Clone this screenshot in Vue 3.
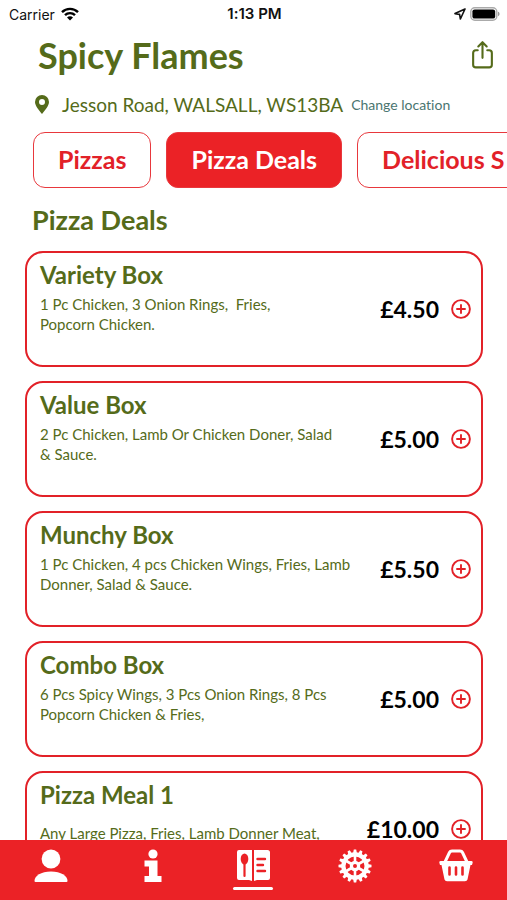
<template>
  <div class="app">
    <div class="status-bar">
      <div class="status-left">
        <span>Carrier</span>
        <svg class="wifi" viewBox="0 0 18 14" fill="none" stroke="#000" stroke-width="2.4">
          <path d="M1 5.2a11.3 11.3 0 0 1 16 0" />
          <path d="M4 8.2a7 7 0 0 1 10 0" />
          <path d="M9 13.6 6 10.6a4.2 4.2 0 0 1 6 0z" fill="#000" stroke="none" />
        </svg>
      </div>
      <span class="clock">1:13 PM</span>
      <div class="status-right">
        <svg class="arrow" viewBox="0 0 12 12" fill="none" stroke="#111" stroke-width="1.6" stroke-linejoin="round">
          <path d="M11 1 1 5.6l4.6.8.8 4.6z" />
        </svg>
        <svg class="battery" viewBox="0 0 30 14">
          <rect x="0.8" y="0.8" width="26" height="12.4" rx="4" fill="#fff" stroke="#aaa" stroke-width="1.4" />
          <rect x="2.4" y="2.4" width="22.8" height="9.2" rx="2.2" fill="#000" />
          <path d="M28 4.8c2 .6 2 3.8 0 4.4z" fill="#999" />
        </svg>
      </div>
    </div>

    <header class="header">
      <h1>Spicy Flames</h1>
      <button class="icon-btn" aria-label="Share">
        <svg class="share" viewBox="0 0 22 30" fill="none" stroke="#556b1a" stroke-width="2.2" stroke-linecap="round" stroke-linejoin="round">
          <path d="M6 10H4q-2.8 0-2.8 2.8v12.4q0 2.8 2.8 2.8h14q2.8 0 2.8-2.8V12.8Q20.8 10 18 10h-2" />
          <path d="M11 18V2M6.6 6 11 1.6 15.4 6" />
        </svg>
      </button>
    </header>

    <div class="location">
      <svg class="pin" viewBox="0 0 14 19">
        <path fill="#556b1a" fill-rule="evenodd" d="M7 0a7 7 0 0 1 7 7c0 4-4.400 8.800-7 12C4.400 15.800 0 11 0 7a7 7 0 0 1 7-7zm0 4a3 3 0 1 0 0 6 3 3 0 0 0 0-6z" />
      </svg>
      <span class="address">Jesson Road, WALSALL, WS13BA</span>
      <a href="#" class="change">Change location</a>
    </div>

    <div class="tabs">
      <button v-for="tab in tabs" :key="tab" class="tab" :class="{ active: tab === activeTab }" @click="activeTab = tab">
        {{ tab }}
      </button>
    </div>

    <main class="menu">
      <h2>{{ activeTab }}</h2>
      <article v-for="item in items" :key="item.name" class="card">
        <div class="info">
          <h3>{{ item.name }}</h3>
          <p :class="{ spaced: item.spaced }">{{ item.description }}</p>
        </div>
        <span class="price">{{ item.price }}</span>
        <button class="icon-btn" :aria-label="'Add ' + item.name">
          <svg class="plus" viewBox="0 0 20 20" fill="none" stroke="#e22128" stroke-width="1.9" stroke-linecap="round">
            <circle cx="10" cy="10" r="8.9" />
            <path d="M10 6v8M6 10h8" />
          </svg>
        </button>
      </article>
    </main>

    <nav class="bottom-nav">
      <button class="nav-item" aria-label="Account">
        <svg viewBox="0 0 34 34" fill="#fff">
          <circle cx="17" cy="10" r="9.4" />
          <path d="M.5 32c0-5 6.500-9.400 16.500-9.400s16.500 4.400 16.500 9.400q0 1-1 1h-31q-1 0-1-1z" />
        </svg>
      </button>
      <button class="nav-item" aria-label="Information">
        <svg viewBox="0 0 34 34" fill="#fff">
          <circle cx="18" cy="5" r="4.600" />
          <path d="M9.500 11.500h13V27h4v6h-17v-6H14v-9.500H9.500z" />
        </svg>
      </button>
      <button class="nav-item current" aria-label="Menu">
        <svg viewBox="0 0 34 34">
          <path fill="#fff" d="M3 1h13v31l-3-1H3q-2 0-2-2V3q0-2 2-2z" />
          <path fill="#fff" d="M18 1h13.500q2.500 0 2.500 2.500V29q0 2-2 2H21l-3 1z" />
          <ellipse cx="8.500" cy="10" rx="3.800" ry="5.500" fill="#eb2226" />
          <path d="M8.500 14v13" stroke="#eb2226" stroke-width="2.200" stroke-linecap="round" />
          <path d="M21.500 10H29M21.500 16H27M21.500 22H29" stroke="#eb2226" stroke-width="2.400" stroke-linecap="round" />
        </svg>
      </button>
      <button class="nav-item" aria-label="Settings">
        <svg viewBox="0 0 34 34" fill="none" stroke="#fff">
          <circle cx="17" cy="17" r="11.6" stroke-width="4.2" />
          <circle cx="17" cy="17" r="3.6" stroke-width="3.2" />
          <path v-for="n in 16" :key="'t' + n" d="M15 4.500 15.800.5h2.400l.8 4z" fill="#fff" stroke="none" :transform="`rotate(${n * 22.5} 17 17)`" />
          <path v-for="n in 6" :key="'s' + n" d="M17 13V6" stroke-width="2.600" :transform="`rotate(${n * 60} 17 17)`" />
        </svg>
      </button>
      <button class="nav-item" aria-label="Basket">
        <svg viewBox="0 0 34 34">
          <path d="M6 13 10.500 3.500Q11.200 2 13 2h8q1.800 0 2.500 1.500L28 13" fill="none" stroke="#fff" stroke-width="3" />
          <path fill="#fff" d="M1.500 12h31q1.500 0 1.200 1.500L33 16h-1.500l-3 14.500q-.5 1.800-2.500 1.800H8q-2 0-2.500-1.800L2.500 16H1L.3 13.500Q0 12 1.500 12z" />
          <path d="M10.500 18.500v7M17 18.500v7M23.500 18.500v7" stroke="#eb2226" stroke-width="2.600" stroke-linecap="round" />
        </svg>
      </button>
    </nav>
  </div>
</template>

<script setup>
import { ref } from 'vue'

const tabs = ['Pizzas', 'Pizza Deals', 'Delicious S']
const activeTab = ref('Pizza Deals')

const items = [
  { name: 'Variety Box', description: '1 Pc Chicken, 3 Onion Rings,  Fries,\nPopcorn Chicken.', price: '£4.50' },
  { name: 'Value Box', description: '2 Pc Chicken, Lamb Or Chicken Doner, Salad\n& Sauce.', price: '£5.00' },
  { name: 'Munchy Box', description: '1 Pc Chicken, 4 pcs Chicken Wings, Fries, Lamb Donner, Salad & Sauce.', price: '£5.50' },
  { name: 'Combo Box', description: '6 Pcs Spicy Wings, 3 Pcs Onion Rings, 8 Pcs Popcorn Chicken & Fries,', price: '£5.00' },
  { name: 'Pizza Meal 1', description: 'Any Large Pizza, Fries, Lamb Donner Meat,', price: '£10.00', spaced: true }
]
</script>

<style>
body {
  margin: 0;
  background: #fff;
}
</style>

<style scoped>
.app {
  display: flex;
  flex-direction: column;
  height: 100vh;
  overflow: hidden;
  font-family: Lato, "Liberation Sans", sans-serif;
  font-variant-ligatures: none;
  color: #556b1a;
}

button {
  padding: 0;
  border: 0;
  background: none;
  font-family: inherit;
  cursor: pointer;
}

svg {
  display: block;
}

h1,
h2,
h3,
p {
  margin: 0;
}

.status-bar {
  flex: none;
  display: grid;
  grid-template-columns: 1fr auto 1fr;
  align-items: center;
  height: 28px;
  padding: 0 7px 0 9px;
  font-family: Inter, "Liberation Sans", sans-serif;
  font-size: 14px;
  color: #111;
}

.status-left,
.status-right {
  display: flex;
  align-items: center;
  gap: 6px;
}

.status-right {
  justify-content: flex-end;
  gap: 4px;
}

.clock {
  font-size: 15px;
  line-height: 20px;
  font-weight: 600;
}

.wifi {
  width: 18px;
  height: 14px;
}

.arrow {
  width: 12px;
  height: 12px;
}

.battery {
  width: 30px;
  height: 14px;
}

.header {
  flex: none;
  display: flex;
  align-items: center;
  justify-content: space-between;
  box-sizing: border-box;
  height: 56px;
  padding: 0 14px 3px 38px;
}

h1 {
  font-size: 36px;
  line-height: 44px;
  font-weight: 700;
}

.share {
  width: 21px;
  height: 30px;
}

.location {
  flex: none;
  display: flex;
  align-items: center;
  height: 40px;
  padding-left: 35px;
  white-space: nowrap;
}

.pin {
  width: 14px;
  height: 19px;
}

.address {
  margin-left: 13px;
  font-size: 19px;
}

.change {
  margin-left: 8px;
  font-size: 14px;
  color: #4a7570;
  text-decoration: none;
}

.tabs {
  flex: none;
  display: flex;
  gap: 15px;
  margin-top: 8px;
  padding-left: 33px;
  overflow: hidden;
}

.tab {
  flex: none;
  height: 56px;
  padding: 0 24px 2px;
  border: 1px solid #e8383d;
  border-radius: 12px;
  font-size: 25px;
  font-weight: 700;
  color: #e22128;
}

.tab.active {
  background: #eb2226;
  color: #fff;
}

.menu {
  flex: 1;
  min-height: 0;
  overflow: hidden;
  padding: 16px 24px 0 25px;
}

h2 {
  padding-left: 7px;
  margin-bottom: 15px;
  font-size: 27px;
  line-height: 32px;
}

.card {
  display: flex;
  align-items: center;
  box-sizing: border-box;
  height: 116px;
  margin-bottom: 14px;
  padding: 0 10px 0 13px;
  border: 2px solid #e22128;
  border-radius: 18px;
}

.info {
  flex: 1;
  align-self: stretch;
  padding-top: 7px;
}

h3 {
  font-size: 24px;
  line-height: 30px;
}

.info p {
  max-width: 320px;
  padding-top: 4px;
  font-size: 15px;
  line-height: 20px;
  white-space: pre-wrap;
}

.info p.spaced {
  padding-top: 13px;
}

.price {
  font-size: 23px;
  line-height: 28px;
  font-weight: 700;
  color: #000;
}

.card .icon-btn {
  margin-left: 12px;
}

.plus {
  width: 20px;
  height: 20px;
}

.bottom-nav {
  flex: none;
  display: grid;
  grid-template-columns: repeat(5, 1fr);
  height: 60px;
  background: #eb2226;
}

.nav-item {
  display: flex;
  flex-direction: column;
  align-items: center;
  padding-top: 9px;
}

.nav-item svg {
  width: 34px;
  height: 34px;
}

.nav-item.current::after {
  content: "";
  width: 40px;
  height: 3px;
  margin-top: 4px;
  border-radius: 2px;
  background: #fff;
}
</style>
